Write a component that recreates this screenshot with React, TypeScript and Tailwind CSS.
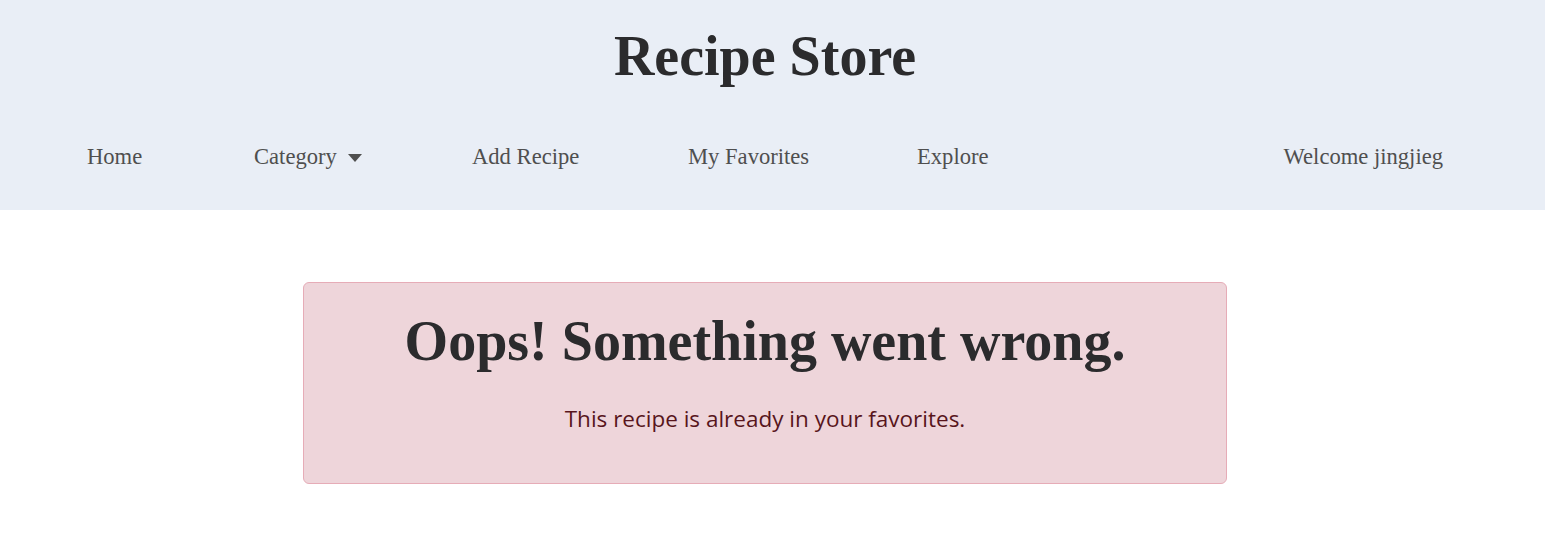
import React from "react";

const serif = { fontFamily: '"Liberation Serif", "Times New Roman", serif' };

export default function App() {
  return (
    <div className="min-h-[553px] bg-white" style={serif}>
      <header className="h-[210px] bg-[#e9eef6]">
        <div className="w-[1530px]">
          <div className="flex h-[112px] items-center justify-center">
            <h1 className="text-[56px] font-bold leading-none text-[#2b2b2d]">Recipe Store</h1>
          </div>
          <nav className="flex h-[88px] items-start px-[87px] pt-[31px] text-[22.6px] leading-[28px] text-[#4f4f4f]">
            <a className="w-[167px]">Home</a>
            <a className="flex w-[218px] items-center">
              Category
              <svg className="ml-[11px] mt-[1px]" width="14" height="8" viewBox="0 0 14 8">
                <path d="M0 0 L14 0 L7 8 Z" fill="#4f4f4f" />
              </svg>
            </a>
            <a className="w-[216px]">Add Recipe</a>
            <a className="w-[229px]">My Favorites</a>
            <a>Explore</a>
            <a className="ml-auto">Welcome jingjieg</a>
          </nav>
        </div>
      </header>
      <main className="flex w-[1530px] justify-center pt-[72px]">
        <div className="flex h-[202px] w-[924px] flex-col items-center rounded-[6px] border border-[#e6acb7] bg-[#eed5da] pt-[28px]">
          <h2 className="text-[56px] font-bold leading-[60px] text-[#2b2b2d]">Oops! Something went wrong.</h2>
          <p
            className="mt-[33px] text-[22.5px] leading-[30px] text-[#58151c]"
            style={{ fontFamily: '"Open Sans", "Noto Sans", sans-serif' }}
          >
            This recipe is already in your favorites.
          </p>
        </div>
      </main>
    </div>
  );
}
